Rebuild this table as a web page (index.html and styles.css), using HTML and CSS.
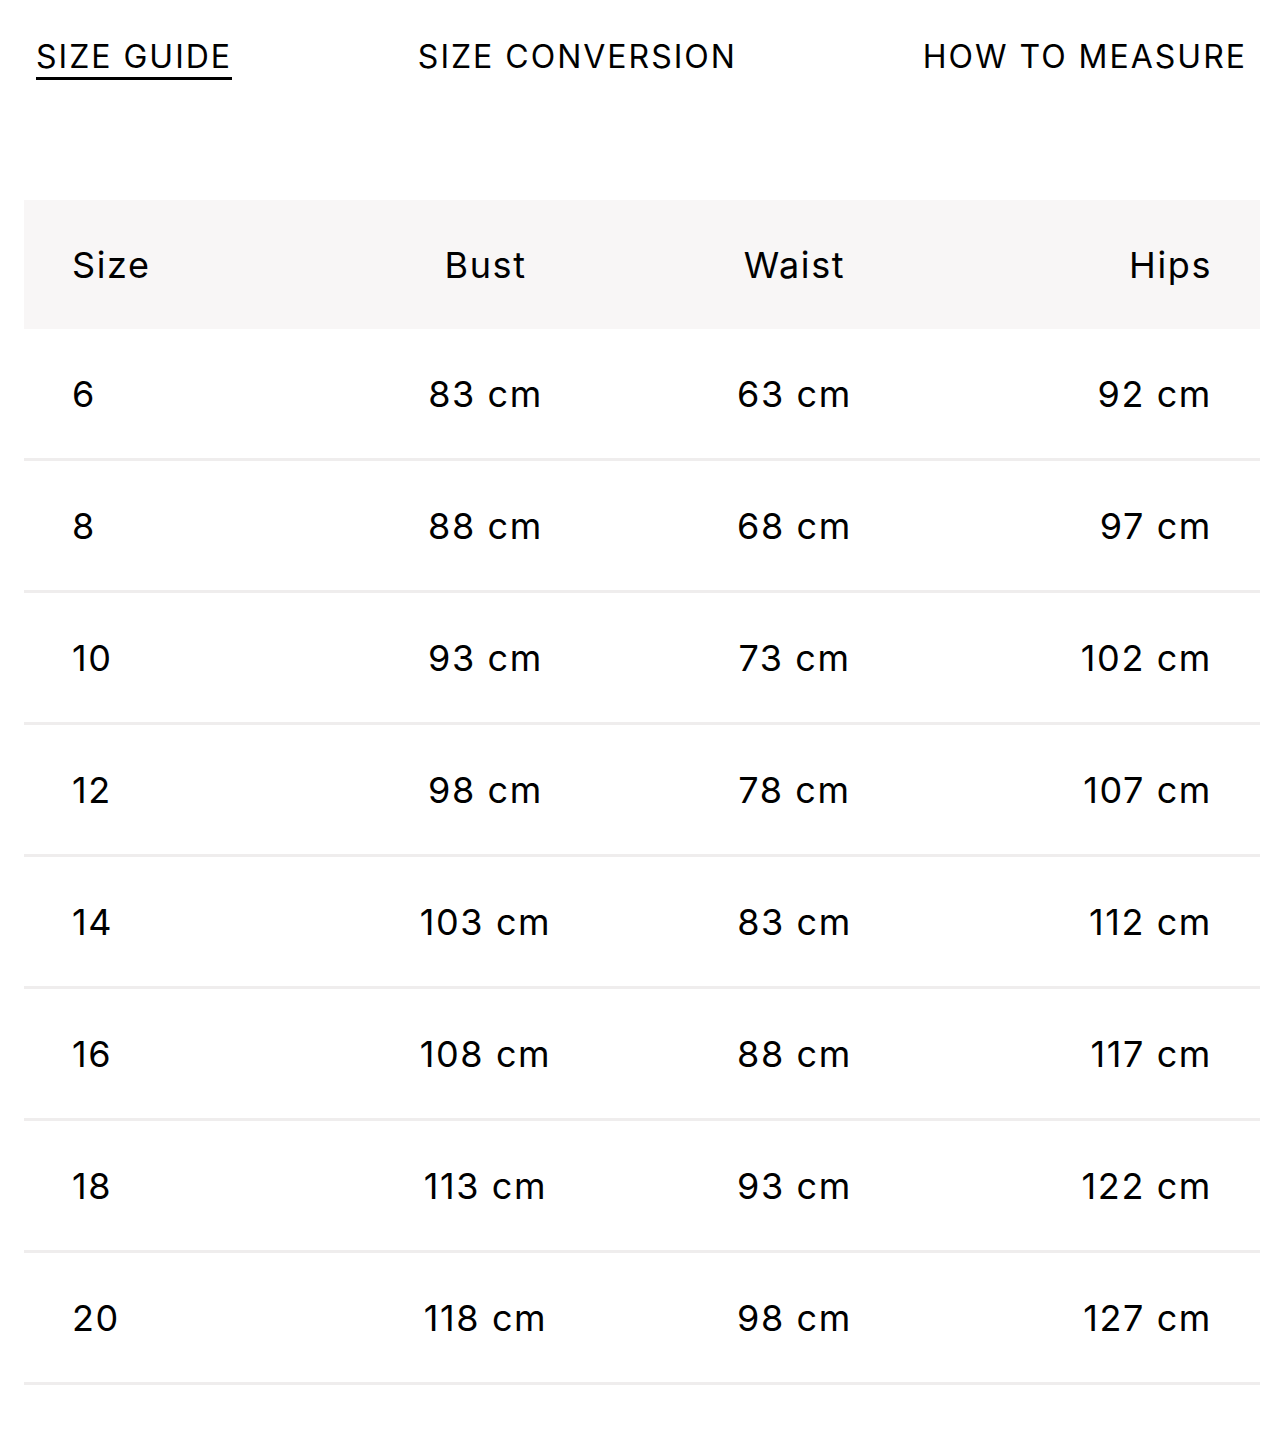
FILE: index.html
```html
<!DOCTYPE html>
<html lang="en">
<head>
<meta charset="utf-8">
<title>Size Guide</title>
<link rel="stylesheet" href="styles.css">
</head>
<body>
<nav class="tabs">
  <a class="tab tab-active">SIZE GUIDE</a>
  <a class="tab">SIZE CONVERSION</a>
  <a class="tab">HOW TO MEASURE</a>
</nav>
<div class="table">
  <div class="row head">
    <div class="c c1">Size</div><div class="c c2">Bust</div><div class="c c3">Waist</div><div class="c c4">Hips</div>
  </div>
  <div class="row"><div class="c c1">6</div><div class="c c2">83 cm</div><div class="c c3">63 cm</div><div class="c c4">92 cm</div></div>
  <div class="row"><div class="c c1">8</div><div class="c c2">88 cm</div><div class="c c3">68 cm</div><div class="c c4">97 cm</div></div>
  <div class="row"><div class="c c1">10</div><div class="c c2">93 cm</div><div class="c c3">73 cm</div><div class="c c4">102 cm</div></div>
  <div class="row"><div class="c c1">12</div><div class="c c2">98 cm</div><div class="c c3">78 cm</div><div class="c c4">107 cm</div></div>
  <div class="row"><div class="c c1">14</div><div class="c c2">103 cm</div><div class="c c3">83 cm</div><div class="c c4">112 cm</div></div>
  <div class="row"><div class="c c1">16</div><div class="c c2">108 cm</div><div class="c c3">88 cm</div><div class="c c4">117 cm</div></div>
  <div class="row"><div class="c c1">18</div><div class="c c2">113 cm</div><div class="c c3">93 cm</div><div class="c c4">122 cm</div></div>
  <div class="row"><div class="c c1">20</div><div class="c c2">118 cm</div><div class="c c3">98 cm</div><div class="c c4">127 cm</div></div>
</div>
</body>
</html>
```
FILE: styles.css
```css
html, body {
  margin: 0;
  padding: 0;
  background: #ffffff;
}
body {
  font-family: Inter, "Liberation Sans", sans-serif;
  color: #000;
}
.tabs {
  display: flex;
  justify-content: space-between;
  padding: 37px 37px 0 36px;
  height: 200px;
  box-sizing: border-box;
}
.tab {
  font-size: 32px;
  letter-spacing: 2px;
  line-height: 40px;
  height: 43px;
  color: #000;
  box-sizing: border-box;
}
.tab-active {
  border-bottom: 3px solid #000;
}
.table {
  margin: 0 24px;
}
.row {
  display: grid;
  grid-template-columns: 259px 309px 309px 263px;
  align-items: center;
  height: 132px;
  padding: 0 48px;
  box-sizing: border-box;
  border-bottom: 3px solid #efeded;
  font-size: 36px;
  letter-spacing: 1.6px;
}
.row.head {
  background: #f8f6f6;
  border-bottom: none;
  height: 129px;
}
.c1 { text-align: left; }
.c2, .c3 { text-align: center; }
.c4 { text-align: right; }
```
